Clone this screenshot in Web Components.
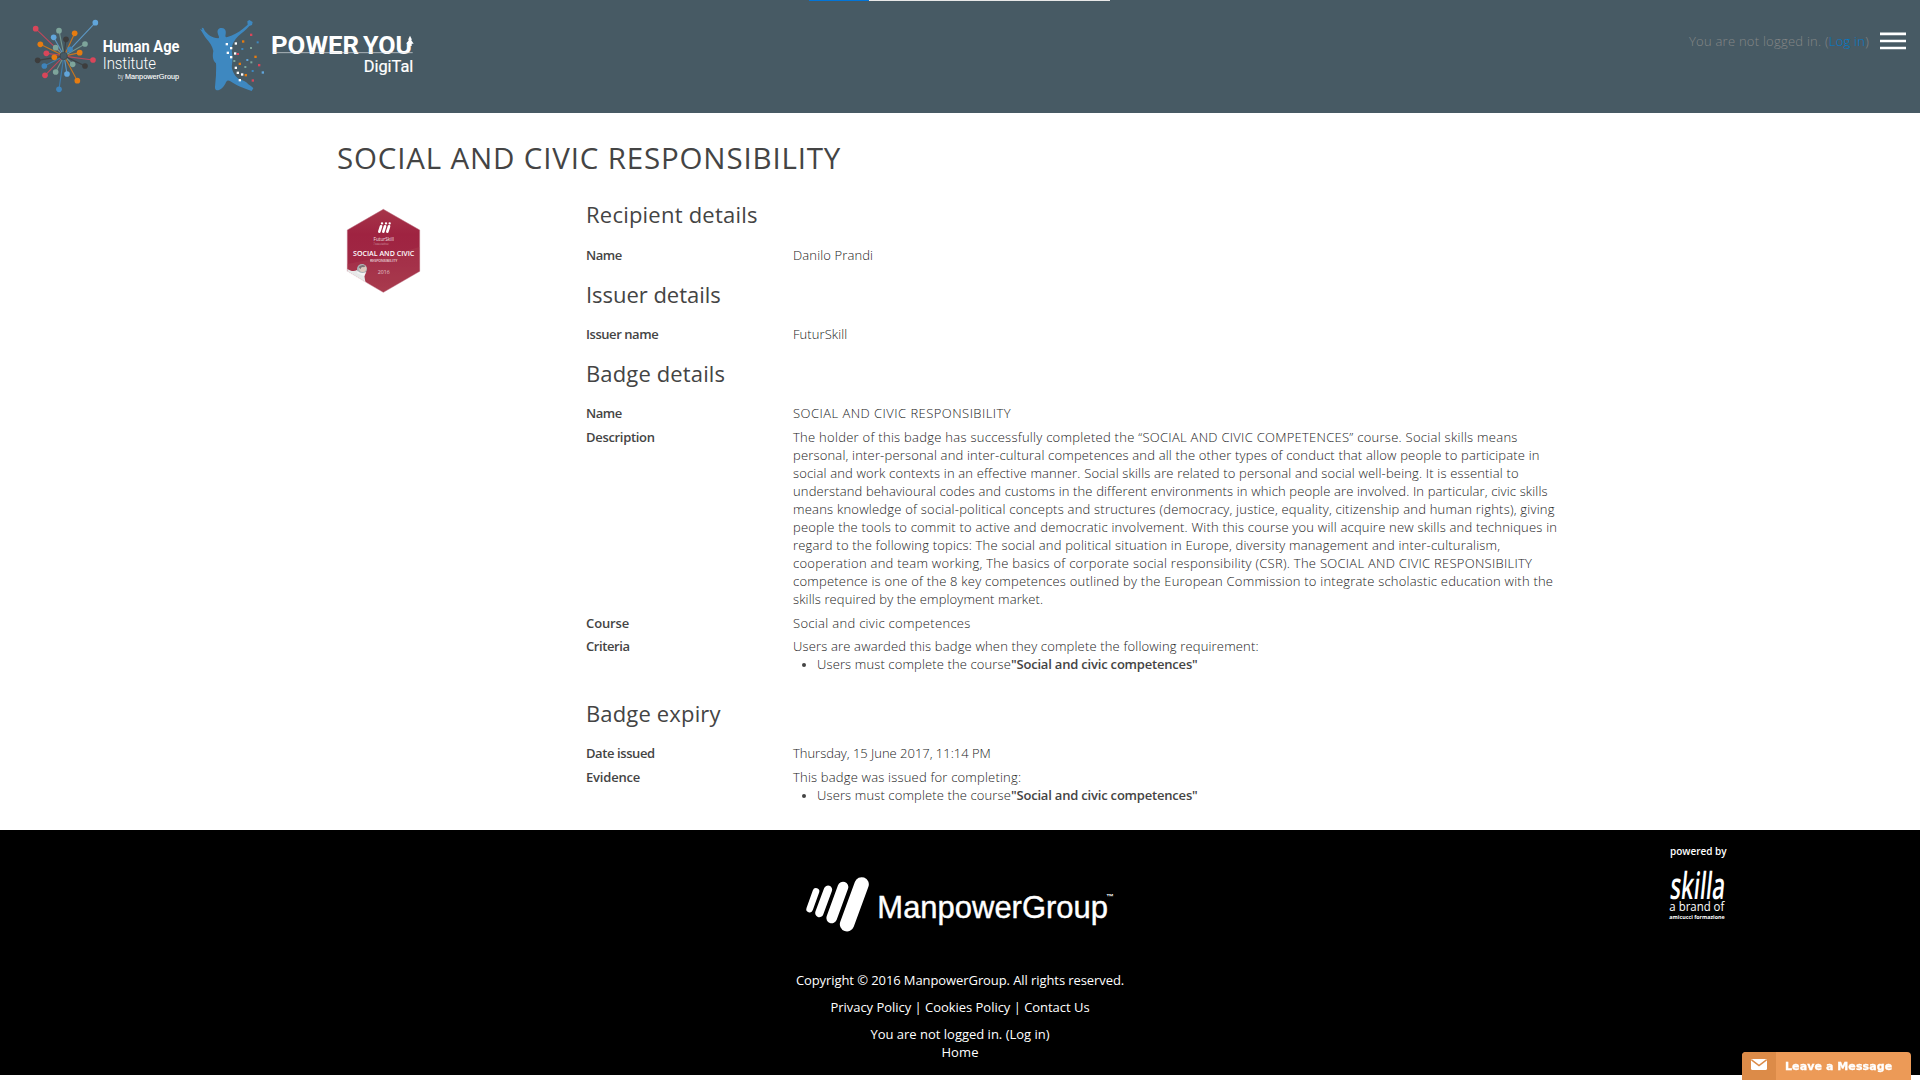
<!DOCTYPE html>
<html lang="en">
<head>
<meta charset="utf-8">
<title>SOCIAL AND CIVIC RESPONSIBILITY</title>
<style>
html,body{margin:0;padding:0;background:#fff}
body{font:300 13px/18px "Open Sans","Liberation Sans",sans-serif;color:#444;overflow:hidden}
</style>
</head>
<body>
<badge-page></badge-page>
<script>
const define=(name,html,extra)=>{
  const t=document.createElement('template');
  t.innerHTML=html;
  customElements.define(name,class extends HTMLElement{
    constructor(){super();this.attachShadow({mode:'open'}).append(t.content.cloneNode(true));}
    connectedCallback(){if(extra)extra.call(this);}
  });
};

/* One line of text tracked to the width given in the "w" attribute. */
define('fit-line',`<style>:host{display:block;white-space:nowrap}span{display:inline-block;white-space:pre}</style><span><slot></slot></span>`,function(){
  const s=this.shadowRoot.querySelector('span');
  const w=+this.getAttribute('w')-(this.hasAttribute('exact')?0:.8),n=this.textContent.length;
  const d=w-s.getBoundingClientRect().width;
  s.style.letterSpacing=(d/n).toFixed(4)+'px';
});

define('site-logos',`<style>:host{display:block;width:440px;height:113px}svg{display:block}text{font-family:Roboto,sans-serif;fill:#fff}</style>
<svg width="440" height="113" viewBox="0 0 1320 339">
 <g stroke-width="3.5" fill="none" opacity=".8">
  <path stroke="#d9465a" d="M107 86L182 158M139 160L180 165M279 180L202 170M135 226L184 176"/>
  <path stroke="#61a5da" d="M286 68L199 160M161 112L187 158M201 222L194 178"/>
  <path stroke="#3e84bb" d="M177 268L190 178M133 198L182 173M210 148L198 162"/>
  <path stroke="#e67c10" d="M121 133L182 163M224 100L197 158M239 158L202 166M232 242L197 177M163 172L180 169"/>
  <path stroke="#7ea59b" d="M177 92L190 157M255 132L201 163M167 143L184 160M218 193L199 174M167 216L187 178"/>
  <path stroke="#3d3d3d" d="M198 118L193 157M113 181L181 170M255 198L201 172"/>
  <circle cx="191" cy="168" r="11" stroke="#3d464b" stroke-width="3"/>
 </g>
 <g fill="#d9465a"><circle cx="107" cy="86" r="8.5"/><circle cx="139" cy="160" r="8.5"/><circle cx="279" cy="180" r="8.5"/><circle cx="135" cy="226" r="8.5"/></g>
 <g fill="#61a5da"><circle cx="286" cy="68" r="8.5"/><circle cx="161" cy="112" r="8.5"/><circle cx="201" cy="222" r="8.5"/></g>
 <g fill="#3e84bb"><circle cx="177" cy="268" r="8.5"/><circle cx="133" cy="198" r="8.5"/><circle cx="210" cy="148" r="8.5"/></g>
 <g fill="#e67c10"><circle cx="121" cy="133" r="8.5"/><circle cx="224" cy="100" r="8.5"/><circle cx="239" cy="158" r="8.5"/><circle cx="232" cy="242" r="8.5"/><circle cx="163" cy="172" r="8.5"/></g>
 <g fill="#7ea59b"><circle cx="177" cy="92" r="8.5"/><circle cx="255" cy="132" r="8.5"/><circle cx="167" cy="143" r="8.5"/><circle cx="218" cy="193" r="8.5"/><circle cx="167" cy="216" r="8.5"/></g>
 <g fill="#3d3d3d"><circle cx="198" cy="118" r="8.5"/><circle cx="113" cy="181" r="8.5"/><circle cx="255" cy="198" r="8.5"/></g>
 <text x="308" y="155" font-size="48" font-weight="700" textLength="230" lengthAdjust="spacingAndGlyphs">Human Age</text>
 <text x="308" y="206" font-size="48" font-weight="300" textLength="160" lengthAdjust="spacingAndGlyphs">Institute</text>
 <text x="353" y="238" font-size="19" font-weight="300" textLength="17" lengthAdjust="spacingAndGlyphs">by</text>
 <text x="375" y="238" font-size="22" style="font-family:'Liberation Sans'" stroke="#fff" stroke-width=".3" textLength="162" lengthAdjust="spacingAndGlyphs">ManpowerGroup</text>
 <path fill="#3e88c0" d="M600 87L607 90L605 83L610 84L615 94C625 105 635 114 655 115C660 112 655 108 653 99C651 88 658 83 666 84C675 85 679 92 677 102C676 108 675 111 680 112C698 106 716 98 728 87L743 74L742 64L748 60L758 66L756 75L748 78C738 90 727 98 715 108C704 119 697 130 695 145L697 170C699 184 693 198 697 209C701 221 706 230 719 238C730 242 739 245 745 253C751 258 757 260 760 265L755 273C744 269 733 264 721 260C710 256 699 248 690 243C681 238 679 245 676 251C670 262 662 269 655 271C647 271 644 267 645 260L648 225C648 211 649 202 648 190C636 179 638 165 640 153C637 138 629 128 618 115C611 105 608 98 600 87Z"/>
 <g fill="#fff"><rect x="677" y="129" width="7" height="7"/><rect x="704" y="127" width="7" height="7"/><rect x="690" y="141" width="7" height="7"/><rect x="680" y="155" width="7" height="7"/><rect x="702" y="157" width="7" height="7"/><rect x="690" y="168" width="7" height="7"/><rect x="704" y="200" width="7" height="7"/><rect x="710" y="215" width="7" height="7"/><rect x="723" y="220" width="7" height="7"/><rect x="716" y="237" width="7" height="7"/></g>
 <g fill="#d9465a"><rect x="750" y="101" width="7" height="7"/><rect x="710" y="159" width="7" height="6"/><rect x="774" y="192" width="7" height="7"/><rect x="755" y="238" width="7" height="7"/></g>
 <g fill="#e67c10"><rect x="726" y="121" width="7" height="7"/><rect x="763" y="167" width="7" height="7"/><rect x="716" y="188" width="7" height="7"/><rect x="734" y="222" width="7" height="7"/></g>
 <g fill="#7ea59b"><rect x="750" y="141" width="6" height="6"/><rect x="700" y="180" width="6" height="6"/><rect x="751" y="184" width="6" height="6"/><rect x="733" y="198" width="6" height="6"/></g>
 <g fill="#3e88c0"><rect x="770" y="124" width="6" height="6"/><rect x="724" y="144" width="6" height="6"/><rect x="755" y="210" width="6" height="6"/></g>
 <g fill="#61a5da"><rect x="739" y="177" width="6" height="6"/><rect x="785" y="214" width="7" height="7"/></g>
 <text x="813" y="163" font-size="77" font-weight="700" textLength="264" lengthAdjust="spacingAndGlyphs">POWER</text>
 <text x="1089" y="163" font-size="77" font-weight="700" textLength="147" lengthAdjust="spacingAndGlyphs">YOU</text>
 <path d="M818 158H1238" stroke="#dfe3e5" stroke-width="2"/>
 <rect x="1216" y="100" width="27" height="27" fill="#475a64"/>
 <path fill="#fff" d="M1230 107L1236 119H1233L1241 131H1235V138H1224V131H1219L1227 119H1224Z"/>
 <text x="1091" y="216" font-size="50" font-weight="400" stroke="#fff" stroke-width=".6" textLength="149" lengthAdjust="spacingAndGlyphs">DigiTal</text>
</svg>`);

define('site-header',`<style>
:host{display:flex;justify-content:space-between;align-items:flex-start;height:113px;background:#475a64;position:relative}
.load{position:absolute;top:0;left:809px;width:301px;height:1px;background:#e8e8e8}
.load i{display:block;width:60px;height:1px;background:#0275d8}
.user{display:flex;gap:11px;padding:32px 14px 0 0;color:#858787}
a{color:#007acc}svg{display:block}
</style>
<div class="load"><i></i></div>
<site-logos></site-logos>
<div class="user"><fit-line exact w="180">You are not logged in. (<a>Log in</a>)</fit-line>
<svg width="26" height="18" viewBox="0 0 26 18"><path d="M0 1.8H26M0 9H26M0 16H26" stroke="#fff" stroke-width="2.7"/></svg></div>`);

define('skill-badge',`<style>:host{display:block;width:100px;height:100px}svg{display:block}text{fill:#fff;text-anchor:middle;font-family:"Open Sans",sans-serif}</style>
<svg width="100" height="100" viewBox="0 0 300 300">
 <defs><linearGradient id="g" x2="0" y2="1"><stop offset="0" stop-color="#a63549"/><stop offset=".3" stop-color="#9f2341"/><stop offset=".65" stop-color="#a02844"/><stop offset="1" stop-color="#a7384b"/></linearGradient></defs>
 <path d="M145 28L254 90V214L145 277L37 214V90Z" fill="url(#g)" stroke="#b9667a" stroke-width="1.5"/>
 <path d="M253 141L168 166L37 192V208L145 276L254 213Z" fill="#ad4154" opacity=".35"/>
 <g stroke="#fff" stroke-width="8" stroke-linecap="round"><path d="M138 79L133 95M150 79L145 95M162 79L157 95"/><path d="M141 70h.1M153 70h.1M164 70h.1" stroke-width="7"/></g>
 <text x="146" y="122" font-size="16" font-weight="500" opacity=".85" textLength="61" lengthAdjust="spacingAndGlyphs">FuturSkill</text>
 <text x="138" y="135" font-size="9" opacity=".6" textLength="46" lengthAdjust="spacingAndGlyphs">Associative</text>
 <text x="146" y="168" font-size="20" font-weight="600" textLength="184" lengthAdjust="spacingAndGlyphs">SOCIAL AND CIVIC</text>
 <text x="146" y="185" font-size="11" font-weight="600" opacity=".8" textLength="82" lengthAdjust="spacingAndGlyphs">RESPONSIBILITY</text>
 <text x="146" y="223" font-size="17" font-weight="400" opacity=".7" textLength="36" lengthAdjust="spacingAndGlyphs">2016</text>
 <path d="M37 207C47 213 57 216 66 210L87 221L91 245L37 214Z" fill="#e7e9e9"/>
 <path d="M37 214L91 245L96 250L35 216Z" fill="#fff"/>
 <circle cx="81" cy="207" r="15" fill="#a9b2b6"/><circle cx="83" cy="205" r="11" fill="#dfc9bd"/><path d="M71 201Q80 190 92 198L87 202Q79 199 76 208Z" fill="#7b7376"/><path d="M68 213Q79 224 94 216L88 229L66 219Z" fill="#f4f4f4"/>
</svg>`);

define('detail-section',`<style>
:host{display:flex;flex-direction:column}
.head{font-size:22px;line-height:24px;font-weight:400;margin-bottom:var(--gap,20px)}
.rows{display:flex;flex-direction:column;gap:6px}
</style><div class="head"><slot name="head"></slot></div><div class="rows"><slot></slot></div>`);

define('detail-row',`<style>
:host{display:flex}
.k{width:207px;flex:none;font-weight:600}
.v{flex:1;color:#222}
</style><div class="k"><slot name="k"></slot></div><div class="v"><slot></slot></div>`);

define('bullet-line',`<style>
:host{display:flex;align-items:center;height:18px;padding-left:8px}
i{width:4px;height:4px;border-radius:50%;background:#444;margin:1px 11px 0 1px}
b{font-weight:600;color:#444}
</style><i></i><fit-line exact w="194">Users must complete the course</fit-line><b><fit-line exact w="186.5">"Social and civic competences"</fit-line></b>`);

define('badge-main',`<style>
:host{display:flex;flex-direction:column;height:717px;padding-left:337px;box-sizing:border-box}
.title{font-size:29.5px;line-height:40px;font-weight:400;padding-top:25px;height:64px}
.cols{display:flex}
.left{width:249px;flex:none}
.left skill-badge{margin:-2px 0 0 -2px}
.right{width:800px;display:flex;flex-direction:column}
</style>
<div class="title"><fit-line w="505">SOCIAL AND CIVIC RESPONSIBILITY</fit-line></div>
<div class="cols"><div class="left"><skill-badge></skill-badge></div>
<div class="right">
<detail-section><fit-line slot="head" w="172.5">Recipient details</fit-line>
 <detail-row><fit-line slot="k" w="36.5">Name</fit-line><fit-line w="81">Danilo Prandi</fit-line></detail-row></detail-section>
<detail-section style="margin-top:18px;--gap:19px"><fit-line slot="head" w="135.5">Issuer details</fit-line>
 <detail-row><fit-line slot="k" w="73">Issuer name</fit-line><fit-line w="55">FuturSkill</fit-line></detail-row></detail-section>
<detail-section style="margin-top:18px;--gap:19px"><fit-line slot="head" w="140">Badge details</fit-line>
 <detail-row><fit-line slot="k" w="36.5">Name</fit-line><fit-line w="219">SOCIAL AND CIVIC RESPONSIBILITY</fit-line></detail-row>
 <detail-row><fit-line slot="k" w="69.5">Description</fit-line>
<fit-line w="725.5">The holder of this badge has successfully completed the “SOCIAL AND CIVIC COMPETENCES” course. Social skills means</fit-line>
<fit-line w="747.5">personal, inter-personal and inter-cultural competences and all the other types of conduct that allow people to participate in</fit-line>
<fit-line w="726.5">social and work contexts in an effective manner. Social skills are related to personal and social well-being. It is essential to</fit-line>
<fit-line w="755.5">understand behavioural codes and customs in the different environments in which people are involved. In particular, civic skills</fit-line>
<fit-line w="762.5">means knowledge of social-political concepts and structures (democracy, justice, equality, citizenship and human rights), giving</fit-line>
<fit-line w="765">people the tools to commit to active and democratic involvement. With this course you will acquire new skills and techniques in</fit-line>
<fit-line w="708">regard to the following topics: The social and political situation in Europe, diversity management and inter-culturalism,</fit-line>
<fit-line w="740">cooperation and team working, The basics of corporate social responsibility (CSR). The SOCIAL AND CIVIC RESPONSIBILITY</fit-line>
<fit-line w="761">competence is one of the 8 key competences outlined by the European Commission to integrate scholastic education with the</fit-line>
<fit-line w="251">skills required by the employment market.</fit-line></detail-row>
 <detail-row><fit-line slot="k" w="44">Course</fit-line><fit-line w="178.5">Social and civic competences</fit-line></detail-row>
 <detail-row style="margin-top:-1px"><fit-line slot="k" w="44.5">Criteria</fit-line><fit-line w="466.5">Users are awarded this badge when they complete the following requirement:</fit-line><bullet-line></bullet-line></detail-row></detail-section>
<detail-section style="margin-top:28px;--gap:19px"><fit-line slot="head" w="135.5">Badge expiry</fit-line>
 <detail-row><fit-line slot="k" w="69.5">Date issued</fit-line><fit-line w="198.5">Thursday, 15 June 2017, 11:14 PM</fit-line></detail-row>
 <detail-row><fit-line slot="k" w="55">Evidence</fit-line><fit-line w="229">This badge was issued for completing:</fit-line><bullet-line></bullet-line></detail-row></detail-section>
</div></div>`);

define('manpower-logo',`<style>:host{display:block;width:320px;height:60px}svg{display:block}</style>
<svg width="320" height="60" viewBox="0 0 960 180">
 <g stroke="#fff" stroke-linecap="round"><path d="M48 55L29 108" stroke-width="20"/><path d="M84 50L58 120" stroke-width="25"/><path d="M129 42L95 135" stroke-width="32"/><path d="M185 34L141 154" stroke-width="43"/></g>
 <g fill="#fff" font-family="Liberation Sans,sans-serif"><text x="232" y="134" font-size="94" stroke="#fff" stroke-width="1.2" textLength="692" lengthAdjust="spacingAndGlyphs">ManpowerGroup</text><text x="919" y="78" font-size="22" font-weight="700" textLength="22" lengthAdjust="spacingAndGlyphs">™</text></g>
</svg>`);

define('skilla-logo',`<style>:host{display:block;width:62px;height:58px}svg{display:block;overflow:visible}text{font-family:"Open Sans",sans-serif}</style>
<svg width="62" height="58" viewBox="0 0 186 174" fill="#fff">
 <text transform="translate(7 98) skewX(-6)" font-size="112" font-weight="600" textLength="164" lengthAdjust="spacingAndGlyphs">skilla</text>
 <text x="7" y="136" font-size="36" font-weight="400" textLength="165" lengthAdjust="spacingAndGlyphs">a brand of</text>
 <text x="7" y="158" font-size="17" font-weight="700" textLength="166" lengthAdjust="spacingAndGlyphs">amicucci formazione</text>
</svg>`);

define('site-footer',`<style>
:host{display:grid;grid-template-columns:1fr 560px 1fr;height:245px;background:#000;color:#fff;font-weight:400}
.mid{grid-column:2;display:flex;flex-direction:column;align-items:center}
.mid manpower-logo{margin:43px 0 38px}
.gap{margin-bottom:9px}
.pow{padding:14px 0 0 430px;display:flex;flex-direction:column;font-size:10px;line-height:14px;font-weight:600}
.pow skilla-logo{margin:8px 0 0 -3px}
</style>
<div class="mid"><manpower-logo></manpower-logo>
<fit-line class="gap" w="329">Copyright © 2016 ManpowerGroup. All rights reserved.</fit-line>
<fit-line class="gap" w="260">Privacy Policy | Cookies Policy | Contact Us</fit-line>
<fit-line w="180">You are not logged in. (Log in)</fit-line>
<fit-line w="38">Home</fit-line></div>
<div class="pow"><fit-line w="57.5">powered by</fit-line><skilla-logo></skilla-logo></div>`);

define('chat-tab',`<style>
:host{position:fixed;left:1742px;bottom:0;width:169px;height:28px;display:flex;border-radius:4px 4px 0 0;overflow:hidden;background:#ec9a57;color:#fff;font:700 11px/30px "DejaVu Sans",sans-serif}
.i{width:34px;background:#dc8b48;display:flex;justify-content:center;padding-top:7px;box-sizing:border-box;margin-right:9px}
svg{display:block}
fit-line{-webkit-text-stroke:.3px #fff}
</style><div class="i"><svg width="16" height="11" viewBox="0 0 16 11"><rect width="16" height="11" rx="1.5" fill="#fff"/><path d="M.5 .8L8 6.5L15.5 .8" fill="none" stroke="#dc8b48" stroke-width="1.5"/></svg></div><fit-line w="108">Leave a Message</fit-line>`);

define('badge-page',`<style>:host{display:flex;flex-direction:column;width:1920px;height:1080px}</style>
<site-header></site-header><badge-main></badge-main><site-footer></site-footer><chat-tab></chat-tab>`);
</script>
</body>
</html>
